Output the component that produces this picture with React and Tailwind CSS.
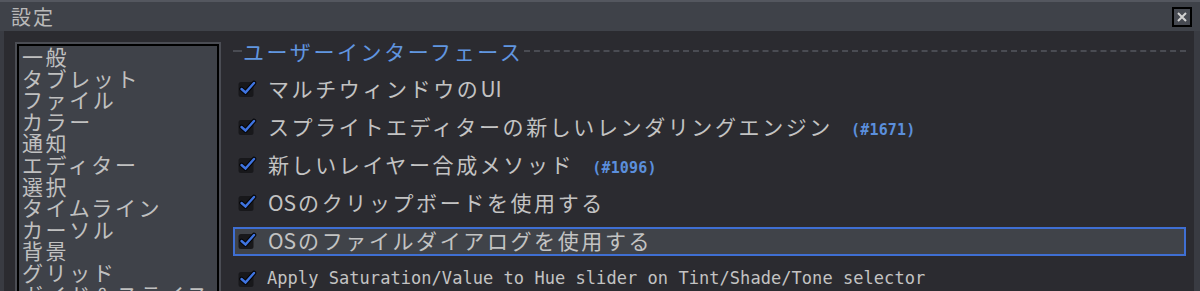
import React from 'react';

const jp = { fontFamily: '"Noto Sans CJK JP", "Noto Sans", sans-serif' };
const px = { fontFamily: '"DejaVu Sans Mono", "Liberation Mono", monospace' };

const categories = [
  '一般', 'タブレット', 'ファイル', 'カラー', '通知', 'エディター',
  '選択', 'タイムライン', 'カーソル', '背景', 'グリッド', 'ガイド＆スライス',
];

function Check() {
  return (
    <svg width="19" height="19" viewBox="0 0 19 19" className="shrink-0 -mt-[2px]">
      <rect x="0.5" y="3" width="15" height="15" rx="2.5" fill="#18181b" />
      <polyline points="3.5,10 7.5,13.5 16,4" fill="none" stroke="#050507" strokeWidth="4.5" strokeLinejoin="round" strokeLinecap="round" />
      <polyline points="3.5,10 7.5,13.5 16,4" fill="none" stroke="#3f74e0" strokeWidth="2.4" strokeLinecap="round" />
    </svg>
  );
}

function En({ children }) {
  return <span className="tracking-normal mr-[2px]">{children}</span>;
}

function Row({ children, active, mono }) {
  return (
    <div className="h-[38px] flex items-center">
      <div
        className={
          'h-[29px] w-full flex items-center pl-[3px] border-2 ' +
          (active ? 'border-[#3f6fd3] bg-[#404349]' : 'border-transparent')
        }
      >
        <Check />
        <div
          className={
            'text-[#c3c3c3] whitespace-nowrap ' +
            (mono ? 'ml-[10px] text-[17px] tracking-[0.05px]' : 'ml-[11px] text-[21px] tracking-[2.6px]')
          }
          style={mono ? px : jp}
        >
          {children}
        </div>
      </div>
    </div>
  );
}

function Tag({ children }) {
  return (
    <span className="ml-[18px] text-[15px] font-bold text-[#5b8fdc] tracking-[0.2px]" style={px}>
      {children}
    </span>
  );
}

export default function App() {
  return (
    <div className="w-[1200px] h-[291px] overflow-hidden bg-[#2b2b30] flex flex-col">
      {/* title bar */}
      <div className="h-[31px] shrink-0 bg-[#3f4249] border-t-2 border-[#54575f] flex items-center justify-between pl-[11px] pr-[8px]">
        <span className="text-[20px] text-[#b9b9b9] tracking-[2px] leading-none" style={jp}>設定</span>
        <div className="w-[20px] h-[20px] border-2 border-black bg-[#474a52] flex items-center justify-center">
          <svg width="12" height="12" viewBox="0 0 12 12">
            <path d="M2 2 L10 10 M10 2 L2 10" stroke="#d2d2d2" strokeWidth="2" />
          </svg>
        </div>
      </div>

      {/* body */}
      <div className="flex-1 flex min-h-0 border-l-4 border-r-[6px] border-[#393b42]">
        <div className="pl-[11px] pt-[11px]">
          <div className="w-[206px] h-[260px] border-2 border-[#4b4d54]">
            <div className="h-full border-2 border-black border-b-0 bg-[#3f4249] pl-[3px] overflow-hidden">
              {categories.map((c) => (
                <div key={c} className="text-[21px] leading-[21.6px] tracking-[2.6px] text-[#c0c0c0] whitespace-nowrap" style={jp}>
                  {c}
                </div>
              ))}
            </div>
          </div>
        </div>

        <div className="flex-1 ml-[12px] pr-[8px] pt-[9px]">
          <div className="h-[22px] flex items-center">
            <div className="w-[9px] border-t-2 border-dashed border-[#4a4c53]" />
            <span className="px-[1px] text-[21px] leading-none tracking-[2.6px] text-[#6196e0]" style={jp}>
              ユーザーインターフェース
            </span>
            <div className="flex-1 border-t-2 border-dashed border-[#4a4c53]" />
          </div>
          <div className="mt-[8px]">
            <Row>マルチウィンドウの<En>UI</En></Row>
            <Row>
              スプライトエディターの新しいレンダリングエンジン<Tag>(#1671)</Tag>
            </Row>
            <Row>
              新しいレイヤー合成メソッド<Tag>(#1096)</Tag>
            </Row>
            <Row><En>OS</En>のクリップボードを使用する</Row>
            <Row active><En>OS</En>のファイルダイアログを使用する</Row>
            <Row mono>Apply Saturation/Value to Hue slider on Tint/Shade/Tone selector</Row>
          </div>
        </div>
      </div>
    </div>
  );
}
